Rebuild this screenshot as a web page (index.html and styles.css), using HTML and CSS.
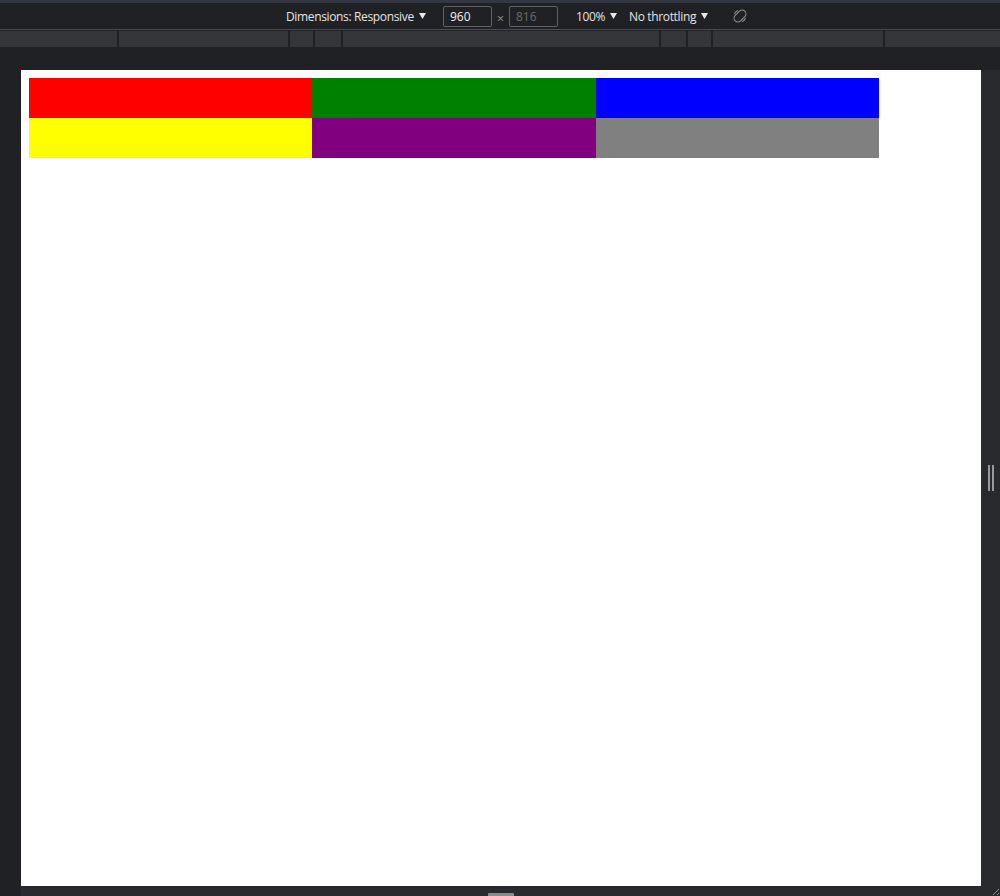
FILE: index.html
```html
<!DOCTYPE html>
<html>
<head>
<meta charset="utf-8">
<link rel="stylesheet" href="styles.css">
</head>
<body>
<div class="topstrip"></div>
<div class="toolbar">
  <span class="item dims">Dimensions: Responsive <svg class="caret" width="7" height="6" viewBox="0 0 7 6"><path d="M0 0H7L3.5 6Z" fill="#e8e8e8"/></svg></span>
  <span class="box box-w">960</span>
  <span class="times">×</span>
  <span class="box box-h">816</span>
  <span class="item zoom">100% <svg class="caret" width="7" height="6" viewBox="0 0 7 6"><path d="M0 0H7L3.5 6Z" fill="#e8e8e8"/></svg></span>
  <span class="item throttle">No throttling <svg class="caret" width="7" height="6" viewBox="0 0 7 6"><path d="M0 0H7L3.5 6Z" fill="#e8e8e8"/></svg></span>
  <svg class="rotate" width="16" height="16" viewBox="0 0 16 16">
    <g fill="none" stroke="#8c8c8c" stroke-width="1.1">
      <rect x="4.2" y="1.2" width="7.6" height="13.6" rx="3.8" transform="rotate(45 8 8)"/>
      <path d="M2.4 6A6 6 0 0 1 6 2.4M13.6 10A6 6 0 0 1 10 13.6"/>
    </g>
  </svg>
</div>
<div class="mediabar">
  <div class="seg s1"></div><div class="seg s2"></div><div class="seg s3"></div><div class="seg s4"></div><div class="seg s5"></div><div class="seg s6"></div><div class="seg s7"></div><div class="seg s8"></div><div class="seg s9"></div>
</div>
<div class="stage">
  <div class="device">
    <div class="viewport">
      <div class="grid">
        <div class="cell red"></div>
        <div class="cell green"></div>
        <div class="cell blue"></div>
        <div class="cell yellow"></div>
        <div class="cell purple"></div>
        <div class="cell gray"></div>
      </div>
    </div>
    <div class="rhandle"><span class="bar"></span><span class="bar"></span></div>
    <div class="bhandle"><span class="hbar"></span></div>
    <div class="corner"><svg width="10" height="10" viewBox="0 0 10 10"><path d="M9 3L3 9M9 7L7 9" stroke="#8c8c8c" stroke-width="1"/></svg></div>
  </div>
</div>
</body>
</html>
```
FILE: styles.css
```css
html, body {
  margin: 0;
  padding: 0;
}
body {
  width: 1000px;
  height: 896px;
  overflow: hidden;
  background: #202124;
  font-family: "Open Sans", "Noto Sans", sans-serif;
  font-size: 12px;
  color: #e3e3e3;
}
.topstrip {
  height: 3px;
  background: #343842;
}
.toolbar {
  display: flex;
  align-items: center;
  padding-left: 286px;
  border-bottom: 1px solid #4a4c50;
  box-sizing: border-box;
  height: 27px;
}
.item {
  display: flex;
  align-items: center;
  white-space: nowrap;
  letter-spacing: -0.35px;
  flex-shrink: 0;
}
.caret {
  margin-left: 5px;
  flex-shrink: 0;
}
.dims {
  width: 140px;
}
.box {
  box-sizing: border-box;
  width: 49px;
  height: 21px;
  border: 1px solid #5f6165;
  border-radius: 2px;
  padding-left: 6px;
  line-height: 19px;
  flex-shrink: 0;
}
.box-w {
  margin-left: 17px;
  color: #f0f0f0;
}
.box-h {
  color: #6c6c6c;
}
.times {
  width: 17px;
  text-align: center;
  color: #8c8c8c;
  font-size: 13px;
  padding-top: 3px;
}
.zoom {
  margin-left: 18px;
  width: 53px;
}
.rotate {
  margin-left: 24px;
  flex-shrink: 0;
}
.mediabar {
  margin-top: 1px;
  height: 16px;
  display: flex;
  gap: 2px;
}
.seg {
  background: #35363a;
  height: 100%;
}
.s1 { width: 117px; }
.s2 { width: 169px; }
.s3 { width: 23px; }
.s4 { width: 26px; }
.s5 { width: 316px; }
.s6 { width: 25px; }
.s7 { width: 23px; }
.s8 { width: 170px; }
.s9 { flex: 1; }
.stage {
  padding: 23px 0 0 21px;
}
.device {
  display: grid;
  grid-template-columns: 960px 19px;
  grid-template-rows: 816px 10px;
}
.viewport {
  background: #ffffff;
  padding: 8px;
}
.grid {
  width: 850px;
  display: grid;
  grid-template-columns: repeat(3, 1fr);
  grid-auto-rows: 40px;
}
.red { background: #ff0000; }
.green { background: #008000; }
.blue { background: #0000ff; }
.yellow { background: #ffff00; }
.purple { background: #800080; }
.gray { background: #808080; }
.rhandle {
  background: #292a2d;
  display: flex;
  align-items: center;
  padding-left: 7px;
  gap: 2px;
}
.bar {
  width: 2px;
  height: 26px;
  background: #9a9a9a;
}
.bhandle {
  background: #292a2d;
  display: flex;
  justify-content: center;
  align-items: flex-end;
}
.hbar {
  width: 26px;
  height: 3px;
  background: #8a8a8a;
  border-radius: 1px 1px 0 0;
}
.corner {
  background: #292a2d;
  display: flex;
  align-items: flex-end;
  justify-content: flex-end;
}
.corner svg {
  display: block;
}
```
